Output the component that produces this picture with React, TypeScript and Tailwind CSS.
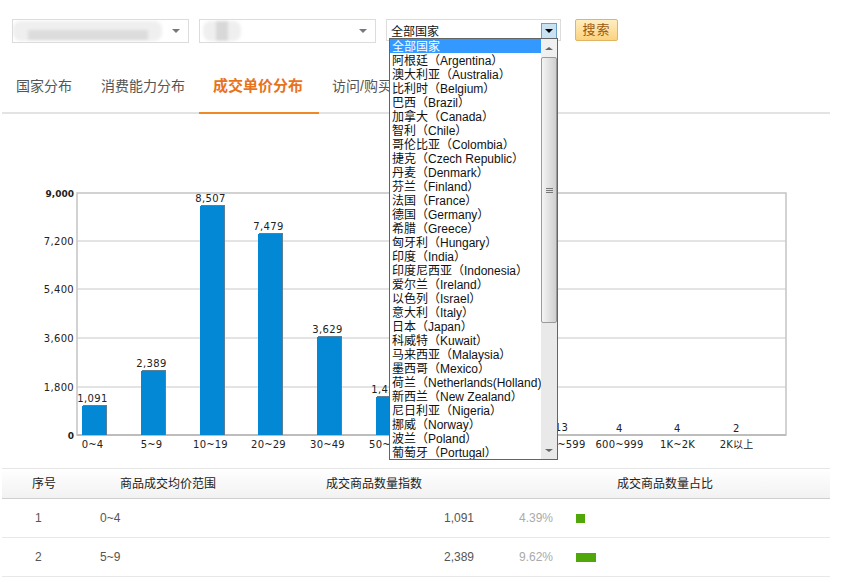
import React from "react";

const countries = [
  "阿根廷（Argentina）", "澳大利亚（Australia）", "比利时（Belgium）", "巴西（Brazil）", "加拿大（Canada）",
  "智利（Chile）", "哥伦比亚（Colombia）", "捷克（Czech Republic）", "丹麦（Denmark）", "芬兰（Finland）",
  "法国（France）", "德国（Germany）", "希腊（Greece）", "匈牙利（Hungary）", "印度（India）",
  "印度尼西亚（Indonesia）", "爱尔兰（Ireland）", "以色列（Israel）", "意大利（Italy）", "日本（Japan）",
  "科威特（Kuwait）", "马来西亚（Malaysia）", "墨西哥（Mexico）", "荷兰（Netherlands(Holland)）", "新西兰（New Zealand）",
  "尼日利亚（Nigeria）", "挪威（Norway）", "波兰（Poland）", "葡萄牙（Portugal）",
];

const yTicks = [
  { y: 193, label: "9,000", bold: true },
  { y: 241, label: "7,200" },
  { y: 289, label: "5,400" },
  { y: 338, label: "3,600" },
  { y: 387, label: "1,800" },
  { y: 435, label: "0", bold: true },
];

const bars = [
  { x: 94, top: 405, value: "1,091", label: "0~4" },
  { x: 153, top: 370, value: "2,389", label: "5~9" },
  { x: 212, top: 205, value: "8,507", label: "10~19" },
  { x: 270, top: 233, value: "7,479", label: "20~29" },
  { x: 329, top: 336, value: "3,629", label: "30~49" },
  { x: 388, top: 396, value: "1,420", label: "50~99" },
  { x: 563, top: 434, value: "13", label: "300~599" },
  { x: 621, top: 435, value: "4", label: "600~999" },
  { x: 679, top: 435, value: "4", label: "1K~2K" },
  { x: 738, top: 435, value: "2", label: "2K以上" },
];

const rows = [
  { no: 1, range: "0~4", count: "1,091", pct: "4.39%", bar: "w-[9px]" },
  { no: 2, range: "5~9", count: "2,389", pct: "9.62%", bar: "w-5" },
];

const Chart = () => (
  <svg width="844" height="354" viewBox="0 114 844 354" className="block font-['DejaVu_Sans','Noto_Sans_CJK_SC',sans-serif]">
    <rect x="77" y="193" width="709" height="242" fill="#fff" stroke="#c4c4c4" strokeWidth="1.5" />
    {yTicks.slice(1, -1).map((t) => (
      <line key={t.y} x1="77" x2="786" y1={t.y} y2={t.y} stroke="#c8c8c8" />
    ))}
    <line x1="77" x2="786" y1="435" y2="435" stroke="#bdbdbd" strokeWidth="2" />
    {yTicks.map((t) => (
      <text key={t.y} x="74" y={t.y + 3.5} textAnchor="end" fontSize={t.bold ? 9 : 10} letterSpacing={t.bold ? 0 : 0.3} fontWeight={t.bold ? 700 : 400} fill="#222">
        {t.label}
      </text>
    ))}
    {bars.map((b) => (
      <g key={b.label}>
        {b.top < 434 && <rect x={b.x - 11} y={b.top} width="24" height={435 - b.top} fill="#5d7f96" />}
        {b.top < 434 && <rect x={b.x - 12} y={b.top + 1} width="24" height={434 - b.top} fill="#0288d4" />}
        <text x={b.x - 1.5} y={b.top - 3} textAnchor="middle" fontSize="10" letterSpacing="0.4" fill="#222">{b.value}</text>
        <text x={b.x - 1.5} y="448" textAnchor="middle" fontSize="10" letterSpacing="0.2" fill="#222">{b.label}</text>
      </g>
    ))}
  </svg>
);

const Caret = () => (
  <span className="h-0 w-0 border-x-[4px] border-t-[4px] border-x-transparent border-t-[#75797f]" />
);

export default function App() {
  return (
    <div className="relative h-[580px] w-[844px] overflow-hidden bg-white font-['Liberation_Sans','Noto_Sans_CJK_SC',sans-serif] text-[12px] text-[#333]">
      <div className="flex items-start pl-3 pt-[19px]">
        <div className="flex h-[24px] w-[177px] items-center justify-end overflow-hidden border border-[#dcdcdc] pr-[8px]">
          <div className="mr-[10px] flex h-[20px] w-[152px] items-end justify-center rounded-[8px] bg-[#efefef] pb-[1px] blur-[1.5px]">
            <div className="h-[10px] w-[120px] bg-[#dcdcdc]" />
          </div>
          <Caret />
        </div>
        <div className="ml-[10px] flex h-[24px] w-[177px] items-center justify-between overflow-hidden border border-[#dcdcdc] pl-[3px] pr-[8px]">
          <div className="flex h-[20px] w-[38px] justify-center rounded-[8px] bg-[#efefef] blur-[1.5px]">
            <div className="h-[20px] w-[12px] bg-[#d8d8d8]" />
          </div>
          <Caret />
        </div>
        <div className="ml-[10px] flex h-[22px] w-[175px] items-end justify-between border border-[#dcdcdc] pl-[4px] pr-[3px]">
          <span className="text-[12px] leading-[15px] text-[#111]">全部国家</span>
          <span className="mb-[1px] flex h-[16px] w-[16px] items-center justify-center border border-[#6f9fbd] bg-[#c9e3f3]">
            <span className="h-0 w-0 border-x-[4px] border-t-[4px] border-x-transparent border-t-black" />
          </span>
        </div>
        <button className="ml-[14px] h-[22px] w-[43px] rounded-[2px] border border-[#e0b563] bg-gradient-to-b from-[#ffeec0] to-[#fcd27e] text-[13px] leading-[20px] tracking-[1px] text-[#9a5a14]">
          搜索
        </button>
      </div>

      <div className="ml-[2px] mt-[27px] flex h-[44px] w-[828px] border-b-2 border-[#e3e3e3] text-[14px] text-[#555]">
        <div className="w-[84px] pl-[14px] pt-[6px]">国家分布</div>
        <div className="w-[113px] pl-[15px] pt-[6px]">消费能力分布</div>
        <div className="-mb-[2px] w-[120px] border-b-2 border-[#ed8a24] pl-[14px] pt-[5px] text-[15px] font-bold text-[#e8731c]">成交单价分布</div>
        <div className="pl-[13px] pt-[6px]">访问/购买</div>
      </div>

      <Chart />

      <div className="ml-[2px] w-[828px]">
        <div className="grid h-[31px] grid-cols-[78px_246px_173px_1fr] items-center border-y border-t-[#e6e6e6] border-b-[#cfcfcf] bg-gradient-to-b from-white to-[#f2f2f2] text-[12px] text-[#222]">
          <div className="pl-[30px]">序号</div>
          <div className="pl-[40px]">商品成交均价范围</div>
          <div className="-ml-[78px] pl-[78px]">成交商品数量指数</div>
          <div className="pl-[118px]">成交商品数量占比</div>
        </div>
        {rows.map((r) => (
          <div key={r.no} className="grid h-[39px] grid-cols-[98px_340px_34px_102px_1fr] items-center border-b border-[#e8e8e8] text-[#555]">
            <div className="pl-[33px]">{r.no}</div>
            <div>{r.range}</div>
            <div className="col-start-3 -ml-[6px] text-right">{r.count}</div>
            <div className="pl-[45px] text-[#aaa]">{r.pct}</div>
            <div>
              <div className={`h-[9px] bg-[#4fa70a] ${r.bar}`} />
            </div>
          </div>
        ))}
      </div>

      <div className="absolute left-[389px] top-[38px] flex h-[422px] w-[169px] border border-[#646464] bg-white text-[12px] text-[#111]">
        <div className="flex-1 overflow-hidden whitespace-nowrap">
          <div className="h-[14px] bg-[#3399ff] pl-[2px] pt-[1px] leading-[14px] text-white">全部国家</div>
          {countries.map((c) => (
            <div key={c} className="h-[14px] pl-[2px] pt-[1px] leading-[14px]">{c}</div>
          ))}
        </div>
        <div className="flex w-[16px] flex-col bg-[#e9e9e9]">
          <div className="flex h-[18px] items-center justify-center bg-[#f0f0f0]">
            <span className="h-0 w-0 border-x-[4px] border-b-[3px] border-x-transparent border-b-[#666]" />
          </div>
          <div className="flex h-[266px] flex-col items-center justify-center gap-[1px] rounded-[2px] border border-[#9a9a9a] bg-gradient-to-r from-[#f4f4f4] to-[#cfcfcf]">
            <span className="h-px w-[7px] bg-[#777]" />
            <span className="h-px w-[7px] bg-[#777]" />
            <span className="h-px w-[7px] bg-[#777]" />
          </div>
          <div className="mt-auto flex h-[18px] items-center justify-center">
            <span className="h-0 w-0 border-x-[4px] border-t-[3px] border-x-transparent border-t-[#666]" />
          </div>
        </div>
      </div>
    </div>
  );
}
